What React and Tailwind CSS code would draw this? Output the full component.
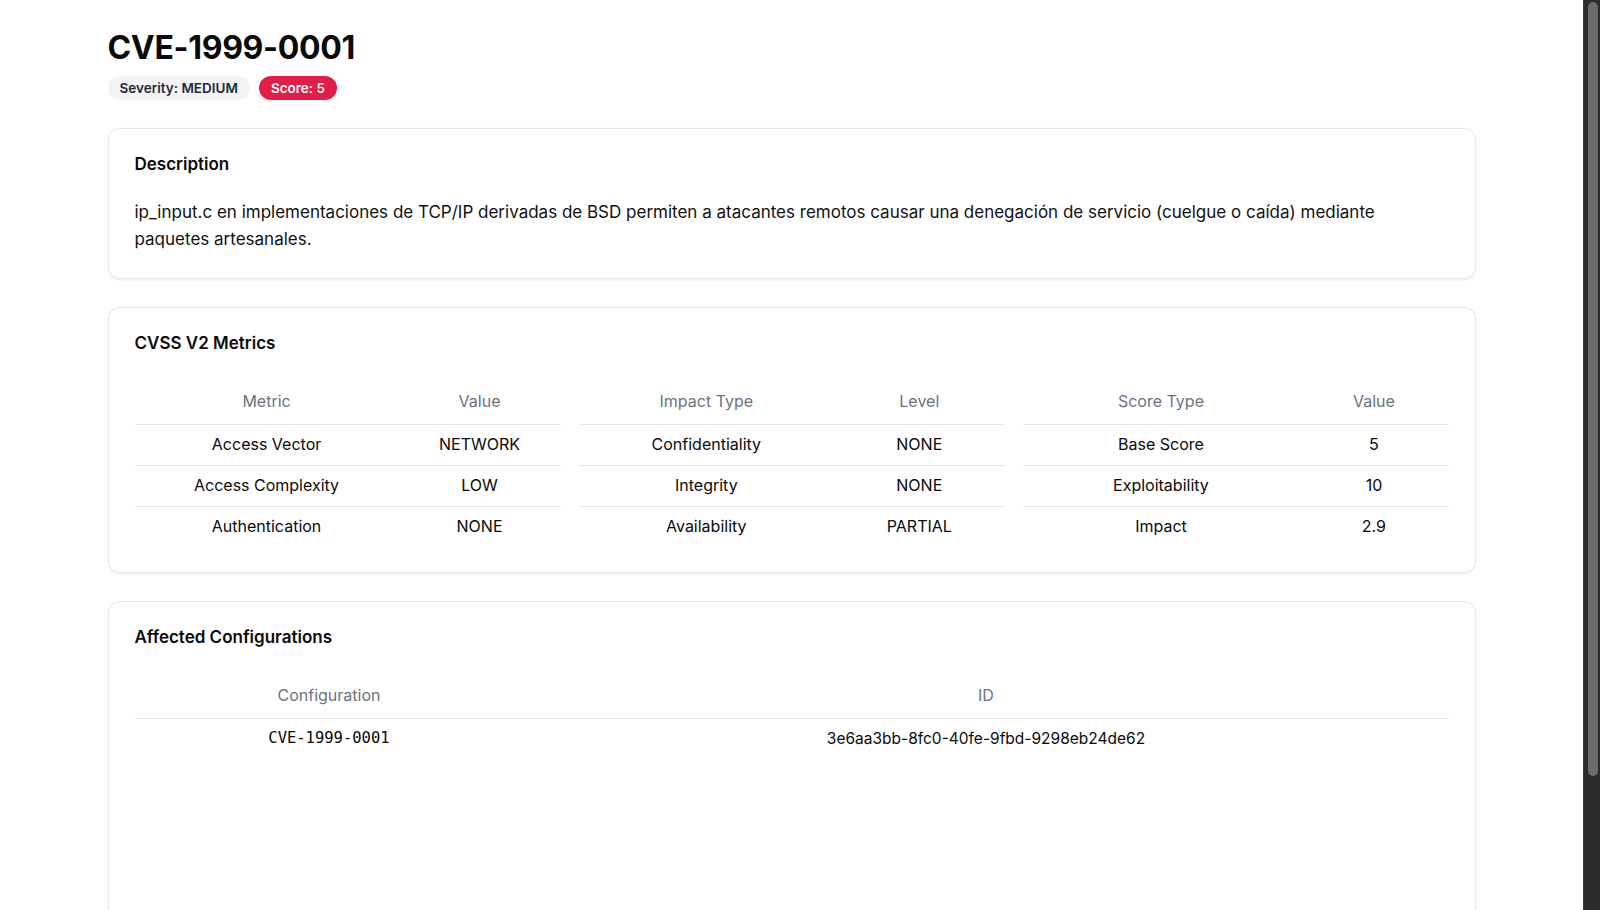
import React from "react";

const cvss = [
  {
    heads: ["Metric", "Value"],
    widths: ["w-[62%]", "w-[38%]"],
    rows: [
      ["Access Vector", "NETWORK"],
      ["Access Complexity", "LOW"],
      ["Authentication", "NONE"],
    ],
  },
  {
    heads: ["Impact Type", "Level"],
    widths: ["w-[60%]", "w-[40%]"],
    rows: [
      ["Confidentiality", "NONE"],
      ["Integrity", "NONE"],
      ["Availability", "PARTIAL"],
    ],
  },
  {
    heads: ["Score Type", "Value"],
    widths: ["w-[65%]", "w-[35%]"],
    rows: [
      ["Base Score", "5"],
      ["Exploitability", "10"],
      ["Impact", "2.9"],
    ],
  },
];

function Card({ title, children, className = "" }) {
  return (
    <section
      className={
        "rounded-xl border border-[#e5e7eb] bg-white px-[26px] pt-[23px] pb-[25px] shadow-[0_1px_3px_rgba(0,0,0,0.08)] " +
        className
      }
    >
      <h2 className="text-[17px] leading-[24px] font-semibold text-[#0a0a0a]">{title}</h2>
      {children}
    </section>
  );
}

function MiniTable({ heads, widths, rows }) {
  return (
    <table className="w-full table-fixed text-center text-[16px]">
      <colgroup>
        <col className={widths[0]} />
        <col className={widths[1]} />
      </colgroup>
      <thead>
        <tr>
          {heads.map((h) => (
            <th key={h} className="h-[43px] pb-[3px] font-normal text-[#6b7280]">
              {h}
            </th>
          ))}
        </tr>
      </thead>
      <tbody>
        {rows.map((r) => (
          <tr key={r[0]}>
            <td className="h-[41px] border-t border-[#e5e7eb] pb-[1px] text-[#0a0a0a]">{r[0]}</td>
            <td className="h-[41px] border-t border-[#e5e7eb] pb-[1px] text-[#0a0a0a]">{r[1]}</td>
          </tr>
        ))}
      </tbody>
    </table>
  );
}

// dark window scrollbar, drawn as the right-hand column
function Scrollbar() {
  return (
    <div className="w-[17px] shrink-0 border-l border-[#3b3b3b] bg-[#2b2b2b] pt-[2px] pl-[4px] pr-[2px]">
      <div className="h-[774px] w-[10px] rounded-full bg-[#6b6b6b]" />
    </div>
  );
}

export default function App() {
  return (
    <div className="flex h-screen overflow-hidden bg-white font-['Inter',sans-serif]">
      <div className="min-w-0 flex-1 overflow-hidden">
        <main className="mx-auto max-w-[1368px] pt-[28px] pb-[40px]">
          <h1 className="text-[32px] leading-[40px] font-bold tracking-[-0.01em] text-[#0a0a0a]">
            CVE-1999-0001
          </h1>
          <div className="mt-[8px] flex gap-[9px]">
            <span className="flex h-6 items-center rounded-full bg-[#f3f4f6] px-3 text-[13.5px] font-semibold text-[#1f2937]">
              Severity: MEDIUM
            </span>
            <span className="flex h-6 items-center rounded-full bg-[#e11d48] px-3 text-[13.5px] font-semibold text-white">
              Score: 5
            </span>
          </div>

          <div className="mt-7 flex flex-col gap-7">
            <Card title="Description">
              <p className="mt-[23px] text-[17px] leading-[27px] text-[#111]">
                ip_input.c en implementaciones de TCP/IP derivadas de BSD permiten a atacantes remotos causar una
                denegación de servicio (cuelgue o caída) mediante paquetes artesanales.
              </p>
            </Card>

            <Card title="CVSS V2 Metrics">
              <div className="mt-[26px] grid grid-cols-3 gap-[18px]">
                {cvss.map((t) => (
                  <MiniTable key={t.heads[0]} {...t} />
                ))}
              </div>
            </Card>

            <Card title="Affected Configurations" className="min-h-[430px]">
              <table className="mt-[26px] w-full table-fixed text-center text-[16px]">
                <colgroup>
                  <col className="w-[29.6%]" />
                  <col className="w-[70.4%]" />
                </colgroup>
                <thead>
                  <tr>
                    <th className="h-[43px] pb-[3px] font-normal text-[#6b7280]">Configuration</th>
                    <th className="h-[43px] pb-[3px] font-normal text-[#6b7280]">ID</th>
                  </tr>
                </thead>
                <tbody>
                  <tr>
                    <td className="h-[41px] border-t border-[#e5e7eb] font-['DejaVu_Sans_Mono',monospace] text-[15.5px] text-[#0a0a0a]">
                      CVE-1999-0001
                    </td>
                    <td className="h-[41px] border-t border-[#e5e7eb] text-[15.5px] text-[#0a0a0a]">
                      3e6aa3bb-8fc0-40fe-9fbd-9298eb24de62
                    </td>
                  </tr>
                </tbody>
              </table>
            </Card>
          </div>
        </main>
      </div>
      <Scrollbar />
    </div>
  );
}
